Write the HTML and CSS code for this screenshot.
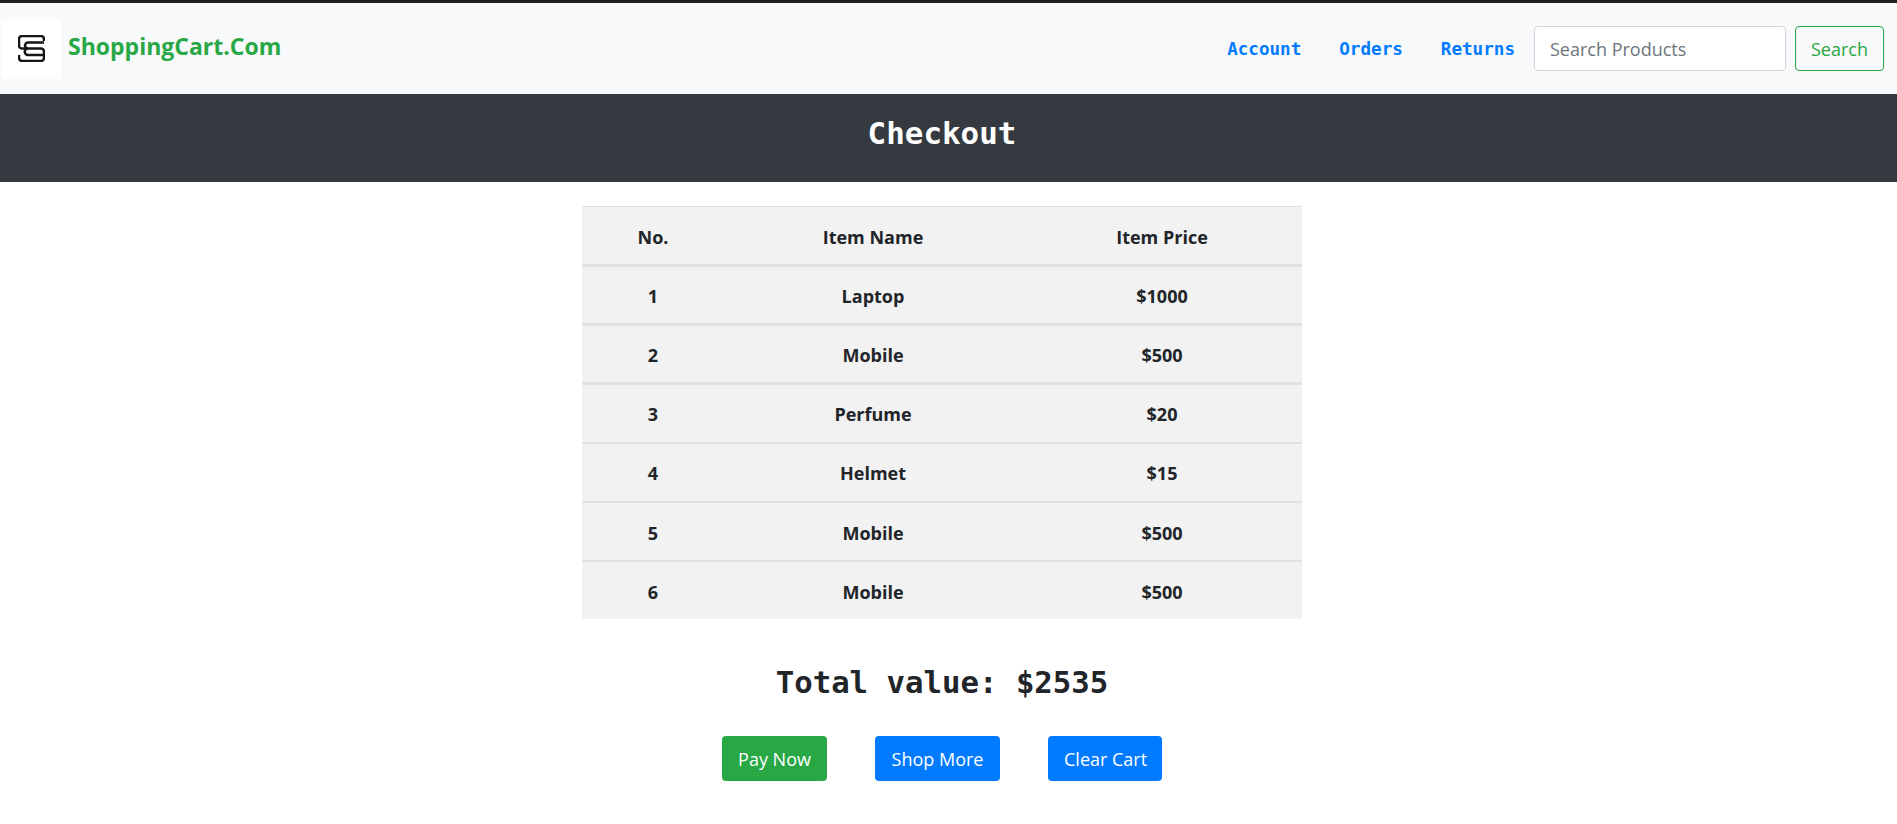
FILE: index.html
```html
<!DOCTYPE html>
<html lang="en">
<head>
    <meta charset="UTF-8">
    <meta name="viewport" content="width=device-width, initial-scale=1.0">
    <title>Checkout</title>
    <link rel="stylesheet" href="styles.css">
</head>
<body>
    <nav class="navbar">
        <a class="brand" href="#">
            <span class="brand-logo">
                <svg width="27" height="27" viewBox="0 0 27 27" fill="none" stroke="#151515" stroke-width="2.500">
                    <path d="M26 6V4a3 3 0 0 0-3-3H4a3 3 0 0 0-3 3v6a3 3 0 0 0 3 3.500h19a3 3 0 0 1 3 3V23a3 3 0 0 1-3 3H4a3 3 0 0 1-3-3v-3"/>
                    <path d="M26 7.500H10a3 3 0 0 0 0 6a3 3 0 0 0 0 6.500H25"/>
                </svg>
            </span>
            <span class="brand-name">ShoppingCart.Com</span>
        </a>
        <div class="nav-right">
            <a class="nav-link" href="#">Account</a>
            <a class="nav-link" href="#">Orders</a>
            <a class="nav-link" href="#">Returns</a>
            <form class="search">
                <input class="search-input" type="text" placeholder="Search Products">
                <button class="btn btn-outline" type="button">Search</button>
            </form>
        </div>
    </nav>

    <header class="page-title">
        <h1>Checkout</h1>
    </header>

    <main class="content">
        <table class="cart">
            <tr><th>No.</th><th>Item Name</th><th>Item Price</th></tr>
            <tr><td>1</td><td>Laptop</td><td>$1000</td></tr>
            <tr><td>2</td><td>Mobile</td><td>$500</td></tr>
            <tr><td>3</td><td>Perfume</td><td>$20</td></tr>
            <tr><td>4</td><td>Helmet</td><td>$15</td></tr>
            <tr><td>5</td><td>Mobile</td><td>$500</td></tr>
            <tr><td>6</td><td>Mobile</td><td>$500</td></tr>
        </table>

        <h2 class="total">Total value: $2535</h2>

        <div class="actions">
            <button class="btn btn-green" type="button">Pay Now</button>
            <button class="btn btn-blue" type="button">Shop More</button>
            <button class="btn btn-blue" type="button">Clear Cart</button>
        </div>
    </main>
</body>
</html>
```

FILE: styles.css
```css
* {
    box-sizing: border-box;
}

body {
    margin: 0;
    background-color: #fff;
    color: #212529;
    font-family: "Open Sans", "Noto Sans", sans-serif;
    font-size: 18px;
    border-top: 3px solid #212121;
}

.navbar {
    display: flex;
    justify-content: space-between;
    align-items: center;
    height: 91px;
    background-color: #f8f9fa;
    padding: 0 13px 0 1px;
}

.brand {
    display: flex;
    align-items: center;
    text-decoration: none;
}

.brand-logo {
    display: flex;
    align-items: center;
    justify-content: center;
    width: 60px;
    height: 60px;
    margin-right: 7px;
    background-color: #fff;
}

.brand-name {
    margin-bottom: 6px;
    color: #28a745;
    font-size: 23px;
    font-weight: 700;
}

.nav-right {
    display: flex;
    align-items: center;
}

.nav-link {
    margin-right: 38px;
    color: #007bff;
    font-family: "DejaVu Sans Mono", "Liberation Mono", monospace;
    font-size: 17.6px;
    font-weight: 700;
    text-decoration: none;
}

.nav-link:nth-child(3) {
    margin-right: 19px;
}

.search {
    display: flex;
    align-items: center;
}

.search-input {
    width: 252px;
    height: 45px;
    margin-right: 9px;
    padding: 6px 15px;
    border: 1px solid #ced4da;
    border-radius: 4px;
    background-color: #fff;
    font-family: inherit;
    font-size: 18px;
}

.search-input::placeholder {
    color: #6c757d;
}

.btn {
    height: 45px;
    padding: 6px 15px;
    border: 1px solid transparent;
    border-radius: 4px;
    font-family: inherit;
    font-size: 18px;
    white-space: nowrap;
}

.btn-outline {
    border-color: #28a745;
    background-color: transparent;
    color: #28a745;
}

.btn-green {
    width: 105px;
    background-color: #28a745;
    color: #fff;
}

.btn-blue {
    width: 125px;
    background-color: #007bff;
    color: #fff;
}

.btn-blue:last-child {
    width: 114px;
}

.page-title {
    display: flex;
    align-items: center;
    justify-content: center;
    height: 88px;
    padding: 0 13px 11px 0;
    background-color: #343a40;
}

.page-title h1 {
    margin: 0;
    color: #fff;
    font-family: "DejaVu Sans Mono", "Liberation Mono", monospace;
    font-size: 30.9px;
    font-weight: 700;
}

.content {
    display: flex;
    flex-direction: column;
    align-items: center;
    padding: 24px 13px 0 0;
}

.cart {
    width: 720px;
    border-collapse: separate;
    border-spacing: 0;
    background-color: #f2f2f2;
    border-top: 1px solid #dee2e6;
}

.cart th, .cart td {
    height: 59px;
    padding: 2px 0 0;
    border-bottom: 3px solid #dee2e6;
    text-align: center;
    font-size: 18px;
    font-weight: 700;
}

.cart th {
    height: 60px;
}

.cart tr:nth-child(n+4) td {
    border-bottom-width: 2px;
}

.cart tr:nth-child(4) td, .cart tr:nth-child(5) td {
    padding-top: 0;
}

.cart tr:last-child td {
    height: 57px;
    border-bottom: none;
}

.cart th:nth-child(1) {
    width: 142px;
}

.cart th:nth-child(2) {
    width: 298px;
}

.total {
    margin: 46px 0 36px;
    font-family: "DejaVu Sans Mono", "Liberation Mono", monospace;
    font-size: 30.7px;
    font-weight: 700;
}

.actions {
    display: flex;
    gap: 48px;
}
```
